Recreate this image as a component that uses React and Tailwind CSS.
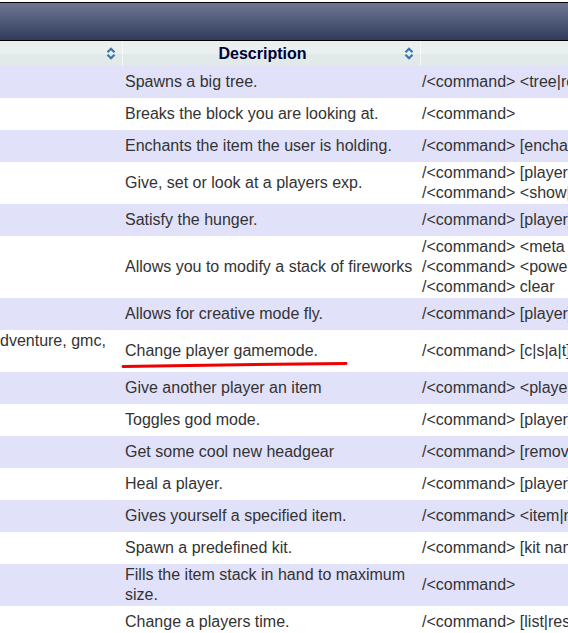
import React from "react";

const rows = [
  { desc: ["Spawns a big tree."], usage: ["/<command> <tree|redwood|jungle|swamp>"] },
  { desc: ["Breaks the block you are looking at."], usage: ["/<command>"] },
  { desc: ["Enchants the item the user is holding."], usage: ["/<command> [enchantmentname] [level]"] },
  {
    desc: ["Give, set or look at a players exp."],
    usage: ["/<command> [playername] [amount]", "/<command> <show|set|give> [playername [amount]]"],
  },
  { desc: ["Satisfy the hunger."], usage: ["/<command> [player]"] },
  {
    desc: ["Allows you to modify a stack of fireworks"],
    usage: ["/<command> <meta param>", "/<command> <power [amount]>", "/<command> clear"],
  },
  { desc: ["Allows for creative mode fly."], usage: ["/<command> [player] [on|off]"] },
  {
    alias: ["dventure, gmc,", "\u00a0"],
    desc: ["Change player gamemode."],
    usage: ["/<command> [c|s|a|t] [player]"],
    marked: true,
  },
  { desc: ["Give another player an item"], usage: ["/<command> <player> <item|numeric> [amount]"] },
  { desc: ["Toggles god mode."], usage: ["/<command> [player] [on|off]"] },
  { desc: ["Get some cool new headgear"], usage: ["/<command> [remove|wear]"] },
  { desc: ["Heal a player."], usage: ["/<command> [player]"] },
  { desc: ["Gives yourself a specified item."], usage: ["/<command> <item|numeric> [amount]"] },
  { desc: ["Spawn a predefined kit."], usage: ["/<command> [kit name] [player]"] },
  { desc: ["Fills the item stack in hand to maximum size."], usage: ["/<command>"] },
  { desc: ["Change a players time."], usage: ["/<command> [list|reset|day|night]"] },
];

const SortIcon = () => (
  <svg width="10" height="13" viewBox="0 0 10 13" className="absolute top-[6px]" style={{ right: 6 }}>
    <path d="M1.5 5.2 L5 1.7 L8.5 5.2" fill="none" stroke="#3a77ad" strokeWidth="2.2" />
    <path d="M1.5 7.8 L5 11.3 L8.5 7.8" fill="none" stroke="#3a77ad" strokeWidth="2.2" />
  </svg>
);

export default function App() {
  return (
    <div
      className="w-[568px] h-[633px] overflow-hidden bg-white text-[16px] leading-[20px] text-[#333333]"
      style={{ fontFamily: '"Liberation Sans", Arial, sans-serif' }}
    >
      <div className="h-[2px] bg-white" />
      <div className="h-[39px] border-t border-b border-black bg-gradient-to-b from-[#6e7893] to-[#313c5c]" />

      {/* header row */}
      <div className="flex h-[25px] bg-gradient-to-b from-[#eaf0f0] from-50% to-[#e2e9e9] to-50%">
        <div className="relative w-[123px] shrink-0 border-r border-[#f6f9f9]">
          <SortIcon />
        </div>
        <div className="relative w-[298px] shrink-0 border-r border-[#f6f9f9] pr-[18px] flex items-center justify-center">
          <span className="font-bold text-[#000036]">Description</span>
          <SortIcon />
        </div>
        <div className="flex-1" />
      </div>

      {rows.map((r, i) => (
        <div
          key={i}
          className={`flex min-h-[32px] ${i % 2 === 0 ? "bg-[#e1e1f9]" : "bg-white"}`}
        >
          <div className="w-[123px] shrink-0 py-px flex flex-col justify-center whitespace-nowrap">
            {r.alias && r.alias.map((a, k) => <div key={k}>{a}</div>)}
          </div>
          <div className="relative w-[298px] shrink-0 py-px px-[2px] flex flex-col justify-center">
            {r.desc.map((d, k) => (
              <div key={k}>{d}</div>
            ))}
            {r.marked && (
              <svg
                width="228"
                height="8"
                viewBox="0 0 228 8"
                className="absolute left-[-2px] top-[31px]"
              >
                <path
                  d="M2 5.5 Q 110 3.5 225 2.5"
                  fill="none"
                  stroke="#ee0000"
                  strokeWidth="3"
                  strokeLinecap="round"
                />
              </svg>
            )}
          </div>
          <div className="flex-1 py-px pl-[1px] flex flex-col justify-center whitespace-nowrap">
            {r.usage.map((u, k) => (
              <div key={k}>{u}</div>
            ))}
          </div>
        </div>
      ))}
    </div>
  );
}
